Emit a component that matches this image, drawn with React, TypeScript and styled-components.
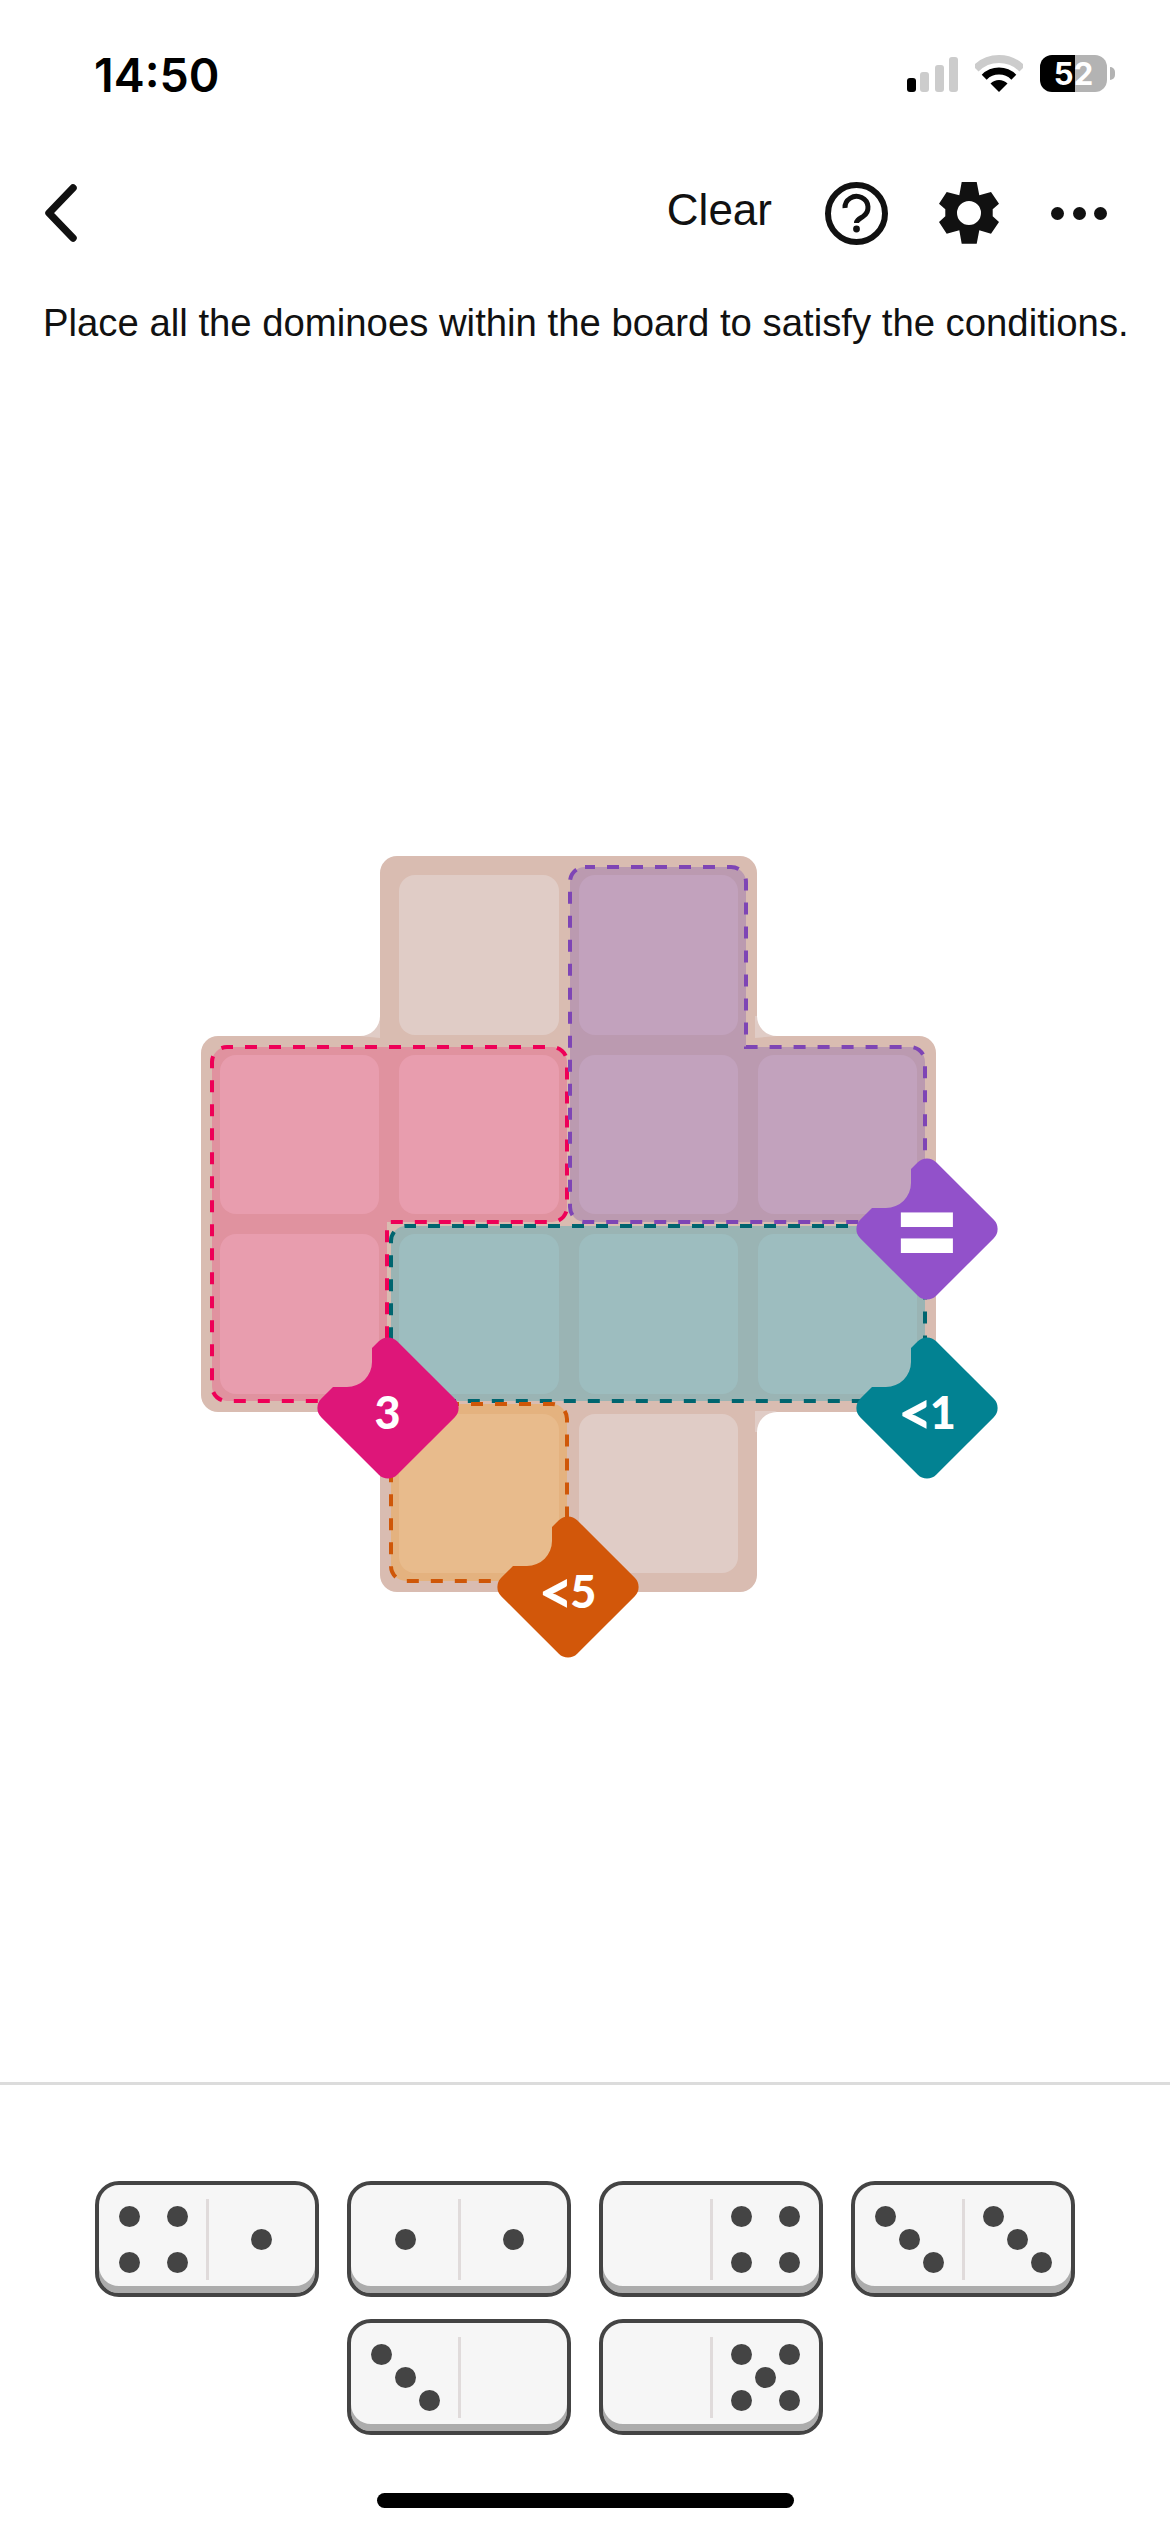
import React from "react";
import styled, { createGlobalStyle } from "styled-components";

type Tone = "empty" | "pink" | "purple" | "teal" | "orange";

const cellColors: Record<Tone, string> = {
  empty: "#e0ccc6",
  pink: "#e89dae",
  purple: "#c2a2bd",
  teal: "#9dbdbf",
  orange: "#e8bb8c",
};

const boardRows: (Tone | null)[][] = [
  [null, "empty", "purple", null],
  ["pink", "pink", "purple", "purple"],
  ["pink", "teal", "teal", "teal"],
  [null, "orange", "empty", null],
];

// region outlines, in page coordinates (the svg viewBox starts at the board's corner)
const regions = [
  {
    fill: "#e0929f",
    stroke: "#ee0057",
    offset: 6,
    d: "M227 1047H552A15 15 0 0 1 567 1062V1207A15 15 0 0 1 552 1222H387V1401H227A15 15 0 0 1 212 1386V1062A15 15 0 0 1 227 1047Z",
  },
  {
    fill: "#bb9ab0",
    stroke: "#7e45b5",
    offset: 2,
    d: "M585 867H731A15 15 0 0 1 746 882V1047H910A15 15 0 0 1 925 1062V1207A15 15 0 0 1 910 1222H585A15 15 0 0 1 570 1207V882A15 15 0 0 1 585 867Z",
  },
  {
    fill: "#9ab4b4",
    stroke: "#00656f",
    offset: 2,
    d: "M406 1226H910A15 15 0 0 1 925 1241V1386A15 15 0 0 1 910 1401H406A15 15 0 0 1 391 1386V1241A15 15 0 0 1 406 1226Z",
  },
  {
    fill: "#e4b27f",
    stroke: "#cf5708",
    offset: 7,
    d: "M406 1404H552A15 15 0 0 1 567 1419V1566A15 15 0 0 1 552 1581H406A15 15 0 0 1 391 1566V1419A15 15 0 0 1 406 1404Z",
  },
];

const badges = [
  { op: "", value: "=", color: "#9251ca", x: 726, y: 373, big: true },
  { op: "", value: "3", color: "#de1679", x: 186.5, y: 552 },
  { op: "<", value: "1", color: "#028292", x: 726, y: 552 },
  { op: "<", value: "5", color: "#d2570a", x: 366.5, y: 731 },
];

const pipSpots: Record<number, [number, number][]> = {
  0: [],
  1: [[2, 2]],
  3: [
    [1, 1],
    [2, 2],
    [3, 3],
  ],
  4: [
    [1, 1],
    [3, 1],
    [1, 3],
    [3, 3],
  ],
  5: [
    [1, 1],
    [3, 1],
    [2, 2],
    [1, 3],
    [3, 3],
  ],
};

const dominoes: [number, number][] = [
  [4, 1],
  [1, 1],
  [0, 4],
  [3, 3],
  [3, 0],
  [0, 5],
];

const DominoHalf: React.FC<{ value: number }> = ({ value }) => (
  <Half>
    {pipSpots[value].map(([col, row]) => (
      <Pip key={`${col}_${row}`} $col={col} $row={row} />
    ))}
  </Half>
);

export default function App() {
  return (
    <Page>
      <GlobalStyle />
      <StatusBar>
        <Clock>14:50</Clock>
        <StatusIcons>
          <svg width="51" height="35" viewBox="0 0 51 35">
            <rect x="0" y="21" width="9" height="14" rx="3" fill="#000" />
            <rect x="13" y="15" width="9" height="20" rx="3" fill="#ccc" />
            <rect x="28" y="8" width="9" height="27" rx="3" fill="#ccc" />
            <rect x="42" y="0" width="9" height="35" rx="3" fill="#ccc" />
          </svg>
          <svg width="48" height="37" viewBox="0 0 48 37">
            <path d="M.7 13.7A33 33 0 0 1 47.3 13.7" fill="none" stroke="#ccc" strokeWidth="8" />
            <path d="M9.2 22.2A21 21 0 0 1 38.8 22.2" fill="none" stroke="#000" strokeWidth="7" />
            <path d="M24 37L15.5 28.5A12 12 0 0 1 32.5 28.5Z" fill="#000" />
          </svg>
          <Battery>
            <BatteryLevel>52</BatteryLevel>
            <BatteryNub />
          </Battery>
        </StatusIcons>
      </StatusBar>

      <NavBar>
        <svg width="34" height="58" viewBox="0 0 34 58">
          <path d="M29 4L5 29L29 54" fill="none" stroke="#111" strokeWidth="7.5" strokeLinecap="round" strokeLinejoin="round" />
        </svg>
        <NavActions>
          <ClearLabel>Clear</ClearLabel>
          <svg width="63" height="63" viewBox="0 0 63 63">
            <circle cx="31.5" cy="31.5" r="28.5" fill="none" stroke="#111" strokeWidth="6" />
            <path d="M20 26A11.5 11 0 1 1 38 34.5C33.5 37.5 31.5 38.5 31.5 41" fill="none" stroke="#111" strokeWidth="5" />
            <circle cx="31.5" cy="47" r="3.4" fill="#111" />
          </svg>
          <GearIcon width="60" height="62" viewBox="0 0 60 62">
            <path
              fillRule="evenodd"
              d="M22.7 0H37.7L40.3 13.3L52 10L60 21.7L53.7 27.3V34.3L60 40L52 51.7L40.3 48.3L37.7 61.7H22.7L20.3 48.3L7.7 51.7L0 40L6.3 34.3V27.3L0 21.7L7.7 10L20.3 13.3ZM30 19A12 12 0 1 0 30 43A12 12 0 1 0 30 19Z"
              fill="#111"
            />
          </GearIcon>
          <MoreDots>
            <Dot />
            <Dot />
            <Dot />
          </MoreDots>
        </NavActions>
      </NavBar>

      <Instruction>Place all the dominoes within the board to satisfy the conditions.</Instruction>

      <BoardArea>
        <Board>
          <BoardShape viewBox="201 856 735 736">
            <path
              d="M397 856H740A17 17 0 0 1 757 873V1036H919A17 17 0 0 1 936 1053V1412H757V1575A17 17 0 0 1 740 1592H397A17 17 0 0 1 380 1575V1412H218A17 17 0 0 1 201 1395V1053A17 17 0 0 1 218 1036H380V873A17 17 0 0 1 397 856Z"
              fill="#d9bcb1"
            />
            <path d="M380 1016A20 20 0 0 1 360 1036L380 1038Z" fill="#e0ccc6" />
            <path d="M757 1016A20 20 0 0 0 777 1036L755 1038V1016Z" fill="#e0ccc6" />
            <path d="M775 1411H755V1432H757A20 20 0 0 1 777 1412Z" fill="#e0ccc6" />
            {regions.map((region) => (
              <path
                key={region.stroke}
                d={region.d}
                fill={region.fill}
                stroke={region.stroke}
                strokeWidth="4"
                strokeDasharray="12 12"
                strokeDashoffset={region.offset}
              />
            ))}
          </BoardShape>
          <CellGrid>
            {boardRows.flat().map((tone, i) =>
              tone ? <Cell key={i} $tone={tone} /> : <span key={i} />
            )}
          </CellGrid>
          {badges.map((badge) => (
            <Badge key={`${badge.op}${badge.value}`} $x={badge.x} $y={badge.y}>
              <svg width="152" height="152" viewBox="-76 -76 152 152">
                <path
                  d="M-16 -60L-9.2 -66.8A13 13 0 0 1 9.2 -66.8L66.8 -9.2A13 13 0 0 1 66.8 9.2L9.2 66.8A13 13 0 0 1 -9.2 66.8L-66.8 9.2A13 13 0 0 1 -66.8 -9.2L-55 -21H-41A25 25 0 0 0 -16 -46Z"
                  fill={badge.color}
                />
              </svg>
              <BadgeLabel $big={badge.big}>
                {badge.op && <Comparator>{badge.op}</Comparator>}
                {badge.value}
              </BadgeLabel>
            </Badge>
          ))}
        </Board>
      </BoardArea>

      <Tray>
        {dominoes.map(([left, right], i) => (
          <Domino key={`${left}_${right}_${i}`}>
            <DominoHalf value={left} />
            <DominoDivider />
            <DominoHalf value={right} />
          </Domino>
        ))}
      </Tray>

      <HomeBar>
        <HomeIndicator />
      </HomeBar>
    </Page>
  );
}

const GlobalStyle = createGlobalStyle`
  html, body {
    margin: 0;
    padding: 0;
    background: #fff;
  }
`;

const Page = styled.div`
  width: 1170px;
  height: 2532px;
  display: flex;
  flex-direction: column;
  font-family: "Liberation Sans", Arial, sans-serif;
  color: #111;
  background: #fff;
`;

const StatusBar = styled.div`
  height: 150px;
  box-sizing: border-box;
  padding: 51px 63px 0 94px;
  display: flex;
  justify-content: space-between;
  align-items: flex-start;
`;

const Clock = styled.div`
  font-family: Inter, sans-serif;
  font-weight: 600;
  font-size: 46.5px;
  line-height: 48px;
  color: #000;
`;

const StatusIcons = styled.div`
  display: flex;
  align-items: flex-end;
  gap: 17px;
  margin-top: 4px;
`;

const Battery = styled.div`
  position: relative;
  width: 67px;
  height: 37px;
  border-radius: 12px;
  background: linear-gradient(90deg, #000 0 35px, #b3b3b3 35px);
  display: flex;
  align-items: center;
  justify-content: center;
`;

const BatteryLevel = styled.span`
  font-family: Inter, sans-serif;
  font-weight: 700;
  font-size: 31px;
  line-height: 37px;
  color: #fff;
`;

const BatteryNub = styled.span`
  position: absolute;
  right: -8px;
  top: 12px;
  width: 5px;
  height: 13px;
  border-radius: 0 6px 6px 0;
  background: #b3b3b3;
`;

const NavBar = styled.div`
  height: 126px;
  box-sizing: border-box;
  padding: 0 63px 0 44px;
  display: flex;
  align-items: center;
  justify-content: space-between;
`;

const NavActions = styled.div`
  display: flex;
  align-items: center;
`;

const ClearLabel = styled.span`
  font-size: 44px;
  line-height: 50px;
  margin-right: 53px;
  transform: translateY(-3px);
`;

const GearIcon = styled.svg`
  margin: 0 52px 0 51px;
`;

const MoreDots = styled.div`
  display: flex;
  gap: 8.5px;
`;

const Dot = styled.span`
  width: 13px;
  height: 13px;
  border-radius: 50%;
  background: #111;
`;

const Instruction = styled.p`
  box-sizing: border-box;
  margin: 0;
  height: 62px;
  padding: 26px 0 0 43px;
  font-size: 38.3px;
  line-height: 42px;
  white-space: nowrap;
`;

const BoardArea = styled.div`
  box-sizing: border-box;
  height: 1747px;
  padding: 518px 0 0 201px;
  border-bottom: 3px solid #dcdcdc;
`;

const Board = styled.div`
  position: relative;
  width: 735px;
  height: 736px;
`;

const BoardShape = styled.svg`
  position: absolute;
  inset: 0;
  width: 735px;
  height: 736px;
`;

const CellGrid = styled.div`
  position: relative;
  height: 100%;
  box-sizing: border-box;
  padding: 19px;
  display: grid;
  grid-template-columns: repeat(4, 1fr);
  grid-template-rows: repeat(4, 1fr);
  gap: 20px;
`;

const Cell = styled.div<{ $tone: Tone }>`
  border-radius: 16px;
  background: ${({ $tone }) => cellColors[$tone]};
`;

const Badge = styled.div<{ $x: number; $y: number }>`
  position: absolute;
  left: ${({ $x }) => $x - 76}px;
  top: ${({ $y }) => $y - 76}px;
  width: 152px;
  height: 152px;
  display: flex;
  align-items: center;
  justify-content: center;

  svg {
    position: absolute;
    inset: 0;
  }
`;

const BadgeLabel = styled.span<{ $big?: boolean }>`
  position: relative;
  display: flex;
  align-items: center;
  font-family: Lato, sans-serif;
  font-weight: 900;
  font-size: ${({ $big }) => ($big ? 116 : 45)}px;
  line-height: 1;
  color: #fff;
  margin-top: ${({ $big }) => ($big ? -6 : 8)}px;
  transform: scaleY(${({ $big }) => ($big ? 1.25 : 1)});
`;

const Comparator = styled.span`
  font-size: 60px;
  line-height: 45px;
  margin-right: -3px;
`;

const Tray = styled.div`
  box-sizing: border-box;
  width: 1170px;
  padding: 96px 95px 0;
  display: flex;
  flex-wrap: wrap;
  justify-content: center;
  gap: 22px 28px;
`;

const Domino = styled.div`
  box-sizing: border-box;
  width: 224px;
  height: 116px;
  display: flex;
  border: 4px solid #444;
  border-radius: 24px;
  background: #f6f6f6;
  box-shadow: inset 0 -7px 0 #acacac;
`;

const Half = styled.div`
  flex: 1;
  display: grid;
  grid-template-columns: repeat(3, 24px);
  grid-template-rows: repeat(3, 23px);
  align-content: center;
  justify-content: center;
`;

const Pip = styled.span<{ $col: number; $row: number }>`
  grid-column: ${({ $col }) => $col};
  grid-row: ${({ $row }) => $row};
  justify-self: center;
  align-self: center;
  width: 21px;
  height: 21px;
  border-radius: 50%;
  background: #444;
`;

const DominoDivider = styled.span`
  flex: none;
  width: 3px;
  margin: 14px -1.5px 13px;
  background: #e0dbdb;
`;

const HomeBar = styled.div`
  flex: 1;
  display: flex;
  justify-content: center;
  align-items: flex-end;
  padding-bottom: 24px;
`;

const HomeIndicator = styled.div`
  width: 417px;
  height: 15px;
  border-radius: 8px;
  background: #000;
`;
